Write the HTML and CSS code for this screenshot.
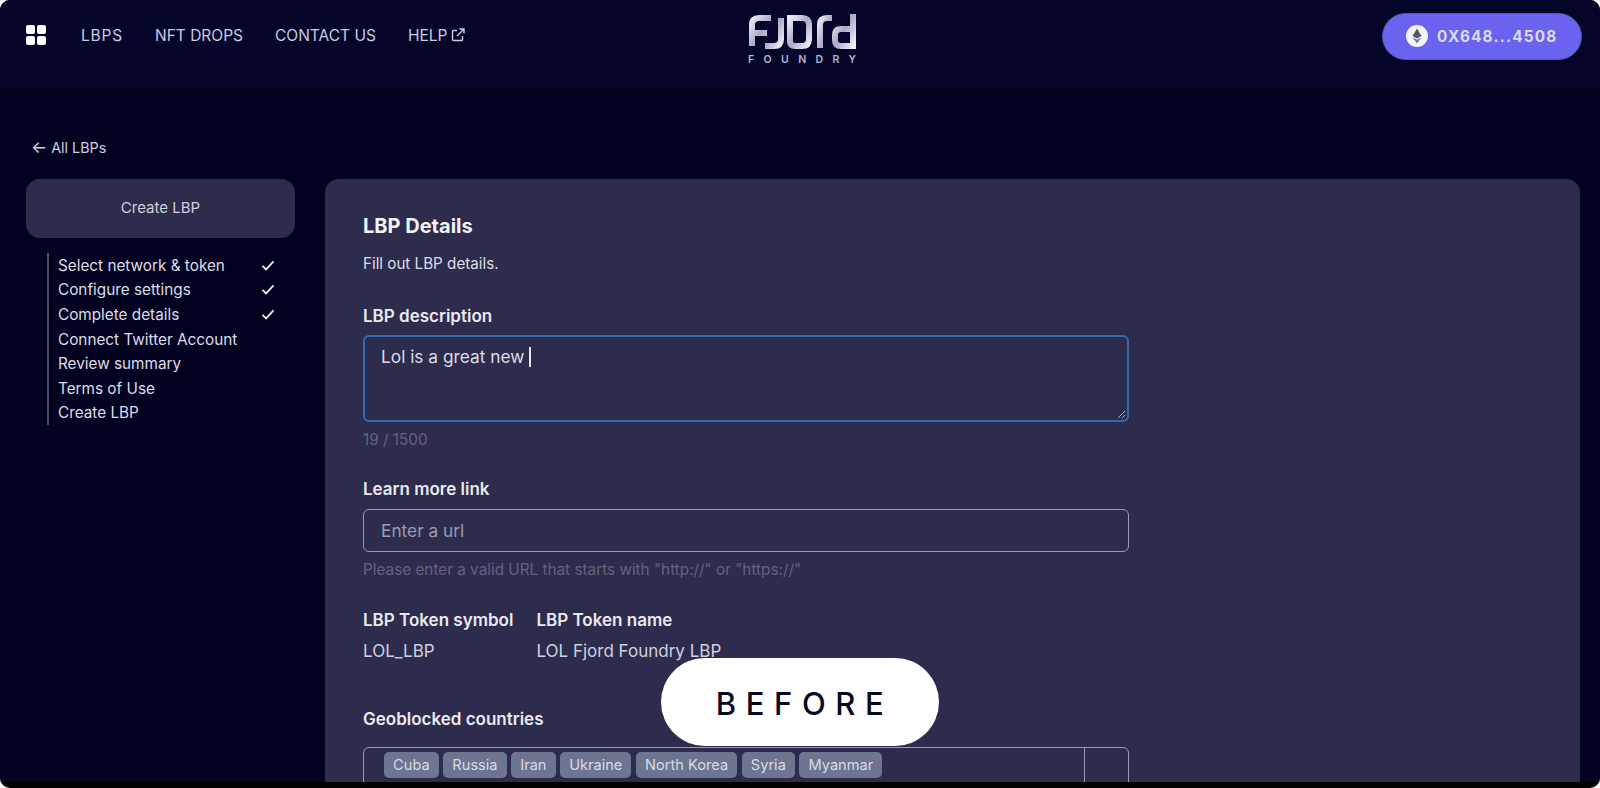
FILE: index.html
```html
<!DOCTYPE html>
<html lang="en">
<head>
  <meta charset="UTF-8" />
  <title>Fjord Foundry - Create LBP</title>
  <link rel="stylesheet" href="styles.css">
</head>
<body>
  <div class="frame">
    <header class="topbar">
      <nav class="nav">
        <svg class="grid-icon" width="20" height="20" viewBox="0 0 20 20">
          <rect x="0" y="0" width="9" height="9" rx="2"/>
          <rect x="11" y="0" width="9" height="9" rx="2"/>
          <rect x="0" y="11" width="9" height="9" rx="2"/>
          <rect x="11" y="11" width="9" height="9" rx="2"/>
        </svg>
        <a class="nav-link lbps">LBPS</a>
        <a class="nav-link">NFT DROPS</a>
        <a class="nav-link">CONTACT US</a>
        <a class="nav-link help">HELP
          <svg width="14" height="14" viewBox="0 0 14 14" fill="none" stroke="#c9cbe0" stroke-width="1.4">
            <path d="M6 2.5H2.5a1 1 0 0 0-1 1v8a1 1 0 0 0 1 1h8a1 1 0 0 0 1-1V8"/>
            <path d="M6 8l7-7M8.5 1H13v4.5"/>
          </svg>
        </a>
      </nav>
      <div class="logo">
        <svg width="108" height="36" viewBox="0 0 108 36" fill="none" stroke="url(#logoGrad)" stroke-width="6">
          <defs>
            <linearGradient id="logoGrad" x1="0" y1="0" x2="1" y2="1">
              <stop offset="0" stop-color="#e8e9f4"/>
              <stop offset="0.5" stop-color="#a9abc6"/>
              <stop offset="1" stop-color="#eeeef7"/>
            </linearGradient>
          </defs>
          <path d="M4 32V11q0-7 7-7h12M4 19h15"/>
          <path d="M33 4V25q0 7-7 7H17"/>
          <path d="M42 4h12q7 0 7 7v14q0 7-7 7h-7q-5 0-5-5z"/>
          <path d="M72 34V11q0-7 7-7h5"/>
          <path d="M105 0V32H93q-6 0-6-6v-5q0-6 6-6h12"/>
        </svg>
        <span class="logo-sub">FOUNDRY</span>
      </div>
      <button class="wallet">
        <svg width="22" height="22" viewBox="0 0 22 22">
          <circle cx="11" cy="11" r="11" fill="#f4f4f8"/>
          <path d="M11 3.5L6.5 11 11 13.6 15.5 11z" fill="#55556e"/>
          <path d="M11 14.8L6.5 12.2 11 18.5 15.5 12.2z" fill="#77778f"/>
        </svg>
        <span>0X648...4508</span>
      </button>
    </header>

    <main class="page">
      <a class="back"><span class="arrow">&larr;</span> All LBPs</a>
      <div class="columns">
        <aside class="sidebar">
          <div class="side-title">Create LBP</div>
          <ul class="steps">
            <li>Select network &amp; token <svg class="check" width="14" height="11" viewBox="0 0 14 11" fill="none" stroke="#f1f1f6" stroke-width="1.7"><path d="M1.5 5.8l3.6 3.6 7.4-8"/></svg></li>
            <li>Configure settings <svg class="check" width="14" height="11" viewBox="0 0 14 11" fill="none" stroke="#f1f1f6" stroke-width="1.7"><path d="M1.5 5.8l3.6 3.6 7.4-8"/></svg></li>
            <li>Complete details <svg class="check" width="14" height="11" viewBox="0 0 14 11" fill="none" stroke="#f1f1f6" stroke-width="1.7"><path d="M1.5 5.8l3.6 3.6 7.4-8"/></svg></li>
            <li>Connect Twitter Account</li>
            <li>Review summary</li>
            <li>Terms of Use</li>
            <li>Create LBP</li>
          </ul>
        </aside>

        <section class="card">
          <div class="form">
            <h2>LBP Details</h2>
            <p class="intro">Fill out LBP details.</p>

            <div class="label">LBP description</div>
            <div class="textarea">
              <span>Lol is a great new</span><i class="caret"></i>
              <svg class="grip" width="9" height="9" viewBox="0 0 9 9" fill="none" stroke="#a9abbd" stroke-width="1"><path d="M1 8l7-7M5 8l3-3"/></svg>
            </div>
            <div class="hint count">19 / 1500</div>

            <div class="label">Learn more link</div>
            <div class="input">Enter a url</div>
            <div class="hint">Please enter a valid URL that starts with "http://" or "https://"</div>

            <div class="token-row">
              <div>
                <div class="label">LBP Token symbol</div>
                <div class="value">LOL_LBP</div>
              </div>
              <div>
                <div class="label">LBP Token name</div>
                <div class="value">LOL Fjord Foundry LBP</div>
              </div>
            </div>

            <div class="label geo-label">Geoblocked countries</div>
            <div class="multi">
              <div class="chips">
                <span class="chip">Cuba</span>
                <span class="chip">Russia</span>
                <span class="chip">Iran</span>
                <span class="chip">Ukraine</span>
                <span class="chip">North Korea</span>
                <span class="chip">Syria</span>
                <span class="chip">Myanmar</span>
              </div>
              <div class="multi-side"></div>
            </div>
          </div>
        </section>
      </div>
    </main>
    <div class="before">BEFORE</div>
  </div>
</body>
</html>
```

FILE: styles.css
```css
* { box-sizing: border-box; margin: 0; padding: 0; }
html, body {
  height: 100%;
  overflow: hidden;
  background: #fff;
}
body {
  font-family: "Inter", "Liberation Sans", sans-serif;
  color: #e6e7f0;
}
.frame {
  position: relative;
  height: 788px;
  background: #020220;
  border-radius: 10px;
  overflow: hidden;
  border-bottom: 6px solid #000;
}

/* header */
.topbar {
  position: relative;
  height: 88px;
  background: #05052a;
  display: flex;
  align-items: center;
  justify-content: space-between;
  padding: 0 18px 18px 26px;
}
.nav {
  display: flex;
  align-items: center;
  font-size: 15.5px;
  color: #c9cbe0;
}
.grid-icon { fill: #fff; margin-right: 35px; }
.nav-link { margin-right: 32px; }
.lbps { letter-spacing: 0.8px; }
.help { display: flex; align-items: center; gap: 4px; }
.logo {
  position: absolute;
  left: 748px;
  top: 14px;
  display: flex;
  flex-direction: column;
  align-items: center;
}
.logo-sub {
  font-size: 10.5px;
  font-weight: 600;
  letter-spacing: 9.4px;
  margin-right: -9.4px;
  margin-top: 3px;
  color: #b4b5c8;
}
.wallet {
  width: 200px;
  height: 47px;
  margin-top: 2px;
  border: 1px solid #4d5a9a;
  border-radius: 24px;
  background: #6a63f0;
  display: flex;
  align-items: center;
  padding-left: 23px;
  gap: 9px;
  font-family: inherit;
  font-size: 15.3px;
  font-weight: 700;
  letter-spacing: 1.2px;
  color: #dcdcf0;
}

/* page */
.page { padding: 51px 20px 0 26px; }
.back {
  display: block;
  height: 40px;
  padding-left: 5px;
  font-size: 14.3px;
  line-height: 18px;
  color: #cfd0de;
}
.arrow { font-size: 17px; line-height: 14px; }
.columns {
  display: flex;
  gap: 30px;
}
.sidebar { width: 269px; flex-shrink: 0; }
.side-title {
  height: 59px;
  padding-bottom: 2px;
  border-radius: 14px;
  background: #2d2c4c;
  color: #cfd0de;
  font-size: 15px;
  display: flex;
  align-items: center;
  justify-content: center;
}
.steps {
  list-style: none;
  margin: 15px 0 0 21px;
  padding: 0 20px 0 9px;
  border-left: 2px solid #4c4c69;
  font-size: 15.3px;
  color: #dcdde8;
}
.steps li {
  height: 24.6px;
  display: flex;
  align-items: center;
  justify-content: space-between;
}
.card {
  flex: 1;
  height: 640px;
  background: #2d2c4c;
  border-radius: 14px 14px 0 0;
  padding: 34px 38px;
}
.form { width: 766px; }
h2 {
  font-size: 20px;
  font-weight: 700;
  line-height: 26px;
  color: #f2f2f7;
}
.intro {
  margin-top: 16px;
  font-size: 15.2px;
  line-height: 18px;
  color: #dcdde8;
}
.label {
  font-size: 17px;
  font-weight: 600;
  line-height: 20px;
  color: #e9e9f1;
}
.intro + .label { margin-top: 33px; }
.textarea {
  position: relative;
  height: 87px;
  margin-top: 9px;
  border: 2px solid #3568ad;
  border-radius: 6px;
  padding: 9px 16px;
  font-size: 17.3px;
  line-height: 22px;
  color: #dcdde8;
  display: flex;
  align-items: flex-start;
}
.caret {
  width: 2px;
  height: 20px;
  margin: 1px 0 0 5px;
  background: #e6e7f0;
}
.grip { position: absolute; right: 1px; bottom: 1px; }
.hint {
  margin-top: 9px;
  font-size: 15.3px;
  line-height: 18px;
  color: #62627f;
}
.count { margin-bottom: 30px; }
.input {
  height: 43px;
  margin-top: 10px;
  border: 1.5px solid #9a9bb2;
  border-radius: 6px;
  padding: 0 17px;
  font-size: 17.3px;
  line-height: 41px;
  color: #9a9bb2;
}
.token-row {
  display: flex;
  gap: 23px;
  margin-top: 31px;
}
.value {
  margin-top: 11px;
  font-size: 17px;
  line-height: 20px;
  color: #cfd0de;
}
.geo-label { margin-top: 48px; }
.multi {
  display: flex;
  height: 80px;
  margin-top: 18px;
  border: 1.5px solid #9a9bb2;
  border-radius: 6px;
}
.chips {
  flex: 1;
  display: flex;
  align-items: flex-start;
  gap: 4.5px;
  padding: 4px 0 0 20px;
  border-right: 1.5px solid #9a9bb2;
}
.multi-side { width: 43px; }
.chip {
  height: 26px;
  padding: 0 9.1px;
  border-radius: 5px;
  background: #6d7590;
  font-size: 14.6px;
  line-height: 26px;
  color: #d8dae6;
}

/* overlay label on top of the screenshot */
.before {
  position: absolute;
  left: 661px;
  top: 658px;
  width: 278px;
  height: 88px;
  padding-left: 9px;
  border-radius: 44px;
  background: #fff;
  color: #0a0a1e;
  font-family: "Inter", sans-serif;
  font-size: 31px;
  font-weight: 500;
  letter-spacing: 9.6px;
  line-height: 91px;
  text-align: center;
}
```
